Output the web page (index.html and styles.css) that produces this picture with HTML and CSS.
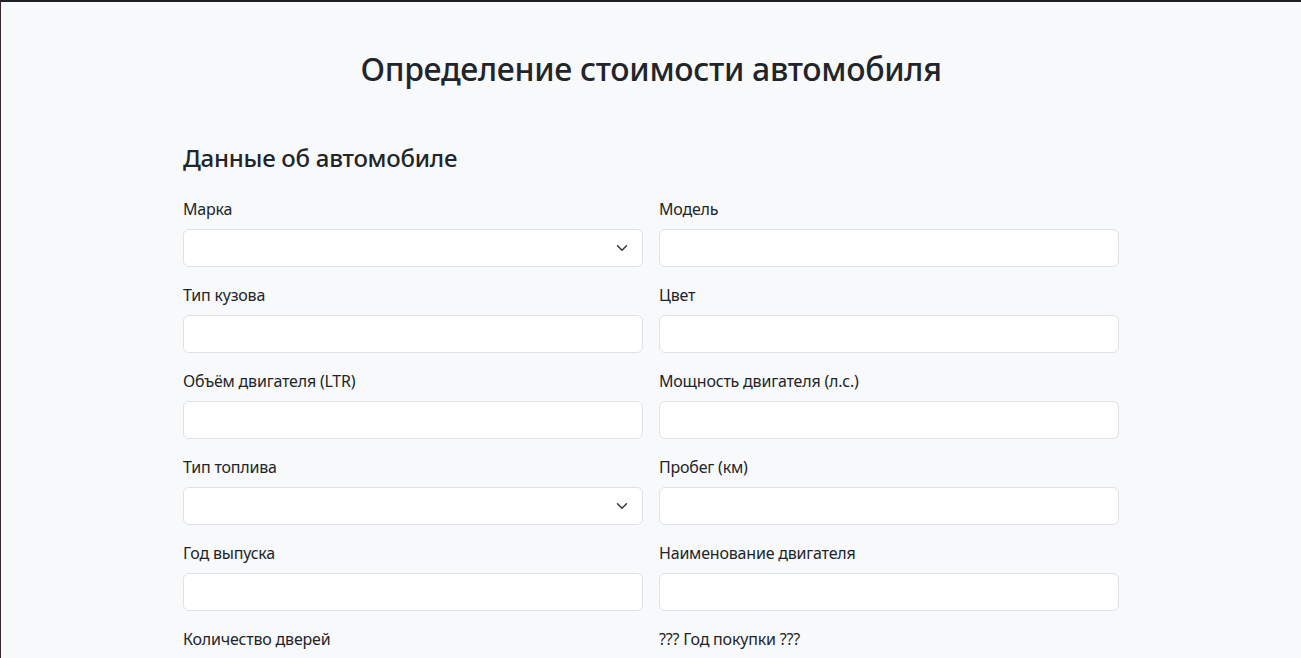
FILE: index.html
```html
<!DOCTYPE html>
<html lang="ru">
<head>
<meta charset="utf-8">
<title>Определение стоимости автомобиля</title>
<link rel="stylesheet" href="styles.css">
</head>
<body>
<main class="page">
  <h1 class="page-title">Определение стоимости автомобиля</h1>
  <section class="car-form">
    <h2 class="section-title">Данные об автомобиле</h2>
    <div class="field-grid">
      <div class="field">
        <label class="field-label">Марка</label>
        <div class="control select"></div>
      </div>
      <div class="field">
        <label class="field-label">Модель</label>
        <div class="control"></div>
      </div>
      <div class="field">
        <label class="field-label">Тип кузова</label>
        <div class="control"></div>
      </div>
      <div class="field">
        <label class="field-label">Цвет</label>
        <div class="control"></div>
      </div>
      <div class="field">
        <label class="field-label">Объём двигателя (LTR)</label>
        <div class="control"></div>
      </div>
      <div class="field">
        <label class="field-label">Мощность двигателя (л.с.)</label>
        <div class="control"></div>
      </div>
      <div class="field">
        <label class="field-label">Тип топлива</label>
        <div class="control select"></div>
      </div>
      <div class="field">
        <label class="field-label">Пробег (км)</label>
        <div class="control"></div>
      </div>
      <div class="field">
        <label class="field-label">Год выпуска</label>
        <div class="control"></div>
      </div>
      <div class="field">
        <label class="field-label">Наименование двигателя</label>
        <div class="control"></div>
      </div>
      <div class="field">
        <label class="field-label">Количество дверей</label>
        <div class="control"></div>
      </div>
      <div class="field">
        <label class="field-label">??? Год покупки ???</label>
        <div class="control"></div>
      </div>
    </div>
  </section>
</main>
</body>
</html>
```

FILE: styles.css
```css
html, body {
  margin: 0;
  padding: 0;
}
body {
  background: #f8f9fa;
  color: #212529;
  font-family: "Noto Sans", "DejaVu Sans", sans-serif;
  font-size: 16px;
  line-height: 1.5;
  border-top: 2px solid #1f2023;
  border-left: 1px solid #3a2b2b;
  min-height: 656px;
  box-sizing: border-box;
  overflow: hidden;
}
.page {
  padding-top: 48px;
}
.page-title {
  margin: 0 0 56px;
  font-size: 32px;
  font-weight: 500;
  line-height: 1.2;
  letter-spacing: -0.3px;
  text-align: center;
}
.car-form {
  width: 936px;
  margin: 0 auto;
}
.section-title {
  margin: 0 0 24px;
  font-size: 24px;
  font-weight: 500;
  line-height: 1.2;
  letter-spacing: -0.25px;
}
.field-grid {
  display: grid;
  grid-template-columns: 1fr 1fr;
  column-gap: 16px;
  row-gap: 16px;
}
.field {
  display: flex;
  flex-direction: column;
}
.field-label {
  display: block;
  margin-bottom: 8px;
  line-height: 24px;
  letter-spacing: -0.2px;
}
.control {
  height: 38px;
  box-sizing: border-box;
  background: #fff;
  border: 1px solid #dee2e6;
  border-radius: 6px;
}
.control.select {
  background-image: url("data:image/svg+xml,%3csvg xmlns='http://www.w3.org/2000/svg' viewBox='0 0 16 16'%3e%3cpath fill='none' stroke='%23343a40' stroke-linecap='round' stroke-linejoin='round' stroke-width='2' d='m2 5 6 6 6-6'/%3e%3c/svg%3e");
  background-repeat: no-repeat;
  background-position: right 12px center;
  background-size: 16px 12px;
}
```
